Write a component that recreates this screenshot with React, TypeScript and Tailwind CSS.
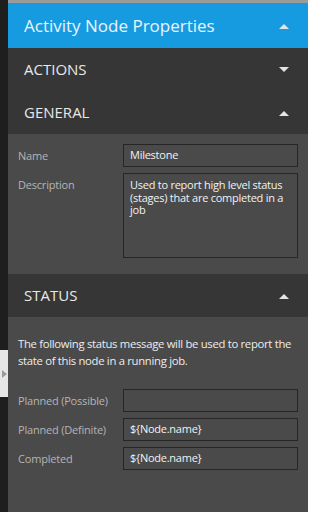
import React from 'react';

const Caret: React.FC<{ up?: boolean }> = ({ up }) => (
  <svg width="10" height="6" viewBox="0 0 10 6" className="shrink-0">
    {up ? <polygon points="0,6 10,6 5,1" fill="#e4e4e4" /> : <polygon points="0,0 10,0 5,5" fill="#e4e4e4" />}
  </svg>
);

const SectionHeader: React.FC<{ title: string; open?: boolean }> = ({ title, open }) => (
  <div className="flex h-[43px] items-center justify-between bg-[#363636] pl-4 pr-[19px]">
    <span className="text-[15px] text-[#e8e8e8]">{title}</span>
    <Caret up={open} />
  </div>
);

const Field: React.FC<{ label: string; value?: string; tall?: boolean }> = ({ label, value, tall }) => (
  <div className="flex">
    <div className="w-[105px] shrink-0 pt-[5px] text-[11px] leading-[14px] tracking-[-0.2px] text-[#b5b5b5]">{label}</div>
    <div
      className={`flex-1 border border-[#262626] bg-[#4a4a4a] px-[6px] text-[11px] tracking-[-0.25px] text-[#f2f2f2] ${
        tall ? 'h-[85px] pt-[5px] leading-[12.7px]' : 'flex h-[23px] items-center'
      }`}
    >
      {value}
    </div>
  </div>
);

const App: React.FC = () => {
  return (
    <div className="flex h-[512px] w-[314px] overflow-hidden bg-white" style={{ fontFamily: '"Open Sans", sans-serif' }}>
      <div className="flex w-2 shrink-0 flex-col bg-[#1e1e1e]">
        <div className="mt-[350px] flex h-[47px] items-center bg-[#e6e6e6] pl-[2px]">
          <svg width="5" height="8" viewBox="0 0 5 8">
            <polygon points="0,0 5,4 0,8" fill="#9a9a9a" />
          </svg>
        </div>
      </div>

      <div className="flex w-[300px] shrink-0 flex-col border-t-[3px] border-[#9b9b9b] bg-[#4a4a4a]">
        <div className="flex h-[45px] items-center justify-between bg-[#179be0] pl-4 pr-[19px]">
          <span className="text-[17px] text-[#e9f4fb]">Activity Node Properties</span>
          <Caret up />
        </div>

        <SectionHeader title="ACTIONS" />
        <SectionHeader title="GENERAL" open />

        <div className="flex h-[140px] flex-col gap-[6px] px-[10px] pt-[10px]">
          <Field label="Name" value="Milestone" />
          <Field label="Description" value="Used to report high level status (stages) that are completed in a job" tall />
        </div>

        <SectionHeader title="STATUS" open />

        <div className="flex flex-col px-[10px] pt-[18px]">
          <p className="text-[11.3px] leading-[17px] tracking-[-0.3px] text-[#ededed]">
            The following status message will be used to report the state of this node in a running job.
          </p>
          <div className="mt-[20px] flex flex-col gap-[6px]">
            <Field label="Planned (Possible)" />
            <Field label="Planned (Definite)" value="${Node.name}" />
            <Field label="Completed" value="${Node.name}" />
          </div>
        </div>
      </div>
    </div>
  );
};

export default App;
